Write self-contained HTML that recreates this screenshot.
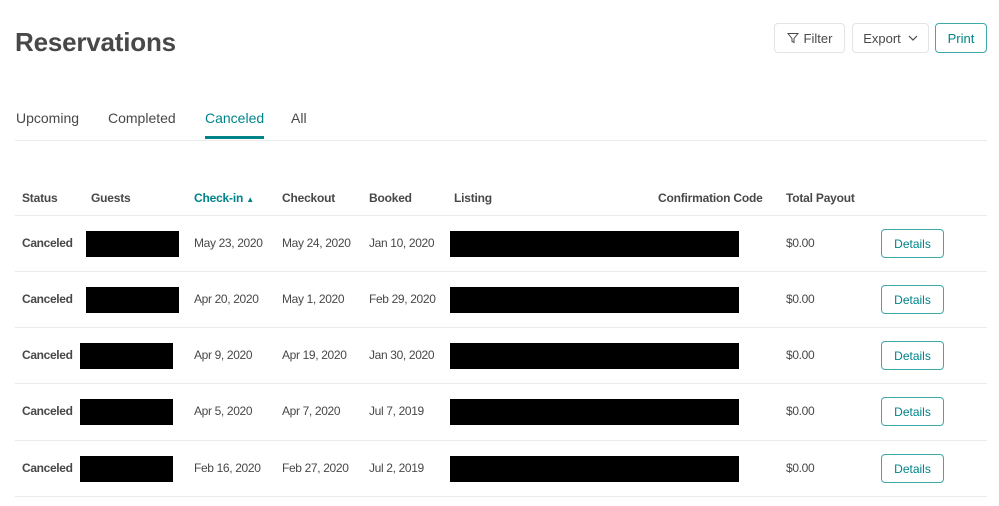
<!DOCTYPE html>
<html><head><style>
*{margin:0;padding:0;box-sizing:border-box}
body{width:999px;height:506px;background:#fff;font-family:"Liberation Sans",sans-serif;color:#484848;position:relative;overflow:hidden}
.a{position:absolute;white-space:nowrap}
.btn{position:absolute;border:1px solid #e4e4e4;border-radius:4px;font-size:13px;display:flex;align-items:center;justify-content:center;height:30px;top:23px}
.hd{font-size:12px;font-weight:bold;top:191px;letter-spacing:-0.2px}
.line{position:absolute;left:15px;width:972px;height:1px;background:#ebebeb}
.cell{font-size:12px;position:absolute;white-space:nowrap;letter-spacing:-0.35px}
.blk{position:absolute;background:#000;height:26px}
.det{position:absolute;left:881px;width:63px;height:29px;border:1px solid #3fa8ab;border-radius:4px;color:#008489;font-size:12px;display:flex;align-items:center;justify-content:center}
</style></head><body>
<div class="a" style="left:15px;top:27px;font-size:26px;font-weight:bold;color:#484848;letter-spacing:-0.2px">Reservations</div>
<div class="btn" style="left:774px;width:71px"><svg width="12" height="12" viewBox="0 0 12 12" style="margin-right:5px"><path d="M1 1.5h10L7 6.5v4L5 9.5v-3z" fill="none" stroke="#484848" stroke-width="1"/></svg>Filter</div>
<div class="btn" style="left:852px;width:77px">Export<svg width="10" height="8" viewBox="0 0 10 8" style="margin-left:7px"><path d="M1 2l4 4 4-4" fill="none" stroke="#484848" stroke-width="1.2"/></svg></div>
<div class="btn" style="left:935px;width:52px;border-color:#3fa8ab;color:#008489">Print</div>
<div class="a" style="left:16px;top:110px;font-size:14px">Upcoming</div>
<div class="a" style="left:108px;top:110px;font-size:14px">Completed</div>
<div class="a" style="left:205px;top:110px;font-size:14px;color:#008489">Canceled</div>
<div class="a" style="left:291px;top:110px;font-size:14px">All</div>
<div class="a" style="left:205px;top:136px;width:59px;height:3px;background:#008489"></div>
<div class="line" style="top:140px"></div>
<div class="a hd" style="left:22px">Status</div>
<div class="a hd" style="left:91px">Guests</div>
<div class="a hd" style="left:194px;color:#008489">Check-in <span style="font-size:8px">▲</span></div>
<div class="a hd" style="left:282px">Checkout</div>
<div class="a hd" style="left:369px">Booked</div>
<div class="a hd" style="left:454px">Listing</div>
<div class="a hd" style="left:658px">Confirmation Code</div>
<div class="a hd" style="left:786px">Total Payout</div>
<div class="line" style="top:215px"></div>
<div class="line" style="top:271px"></div>
<div class="line" style="top:327px"></div>
<div class="line" style="top:383px"></div>
<div class="line" style="top:440px"></div>
<div class="line" style="top:496px"></div>

<div style="position:absolute;left:0;top:243px;width:999px">
<div class="cell" style="left:22px;top:-7px;font-weight:bold">Canceled</div>
<div class="blk" style="left:86px;top:-12px;width:93px"></div>
<div class="cell" style="left:194px;top:-7px">May 23, 2020</div>
<div class="cell" style="left:282px;top:-7px">May 24, 2020</div>
<div class="cell" style="left:369px;top:-7px">Jan 10, 2020</div>
<div class="blk" style="left:450px;top:-12px;width:289px"></div>
<div class="cell" style="left:786px;top:-7px">$0.00</div>
<div class="det" style="top:-14px">Details</div>
</div>
<div style="position:absolute;left:0;top:299px;width:999px">
<div class="cell" style="left:22px;top:-7px;font-weight:bold">Canceled</div>
<div class="blk" style="left:86px;top:-12px;width:93px"></div>
<div class="cell" style="left:194px;top:-7px">Apr 20, 2020</div>
<div class="cell" style="left:282px;top:-7px">May 1, 2020</div>
<div class="cell" style="left:369px;top:-7px">Feb 29, 2020</div>
<div class="blk" style="left:450px;top:-12px;width:289px"></div>
<div class="cell" style="left:786px;top:-7px">$0.00</div>
<div class="det" style="top:-14px">Details</div>
</div>
<div style="position:absolute;left:0;top:355px;width:999px">
<div class="cell" style="left:22px;top:-7px;font-weight:bold">Canceled</div>
<div class="blk" style="left:80px;top:-12px;width:93px"></div>
<div class="cell" style="left:194px;top:-7px">Apr 9, 2020</div>
<div class="cell" style="left:282px;top:-7px">Apr 19, 2020</div>
<div class="cell" style="left:369px;top:-7px">Jan 30, 2020</div>
<div class="blk" style="left:450px;top:-12px;width:289px"></div>
<div class="cell" style="left:786px;top:-7px">$0.00</div>
<div class="det" style="top:-14px">Details</div>
</div>
<div style="position:absolute;left:0;top:411px;width:999px">
<div class="cell" style="left:22px;top:-7px;font-weight:bold">Canceled</div>
<div class="blk" style="left:80px;top:-12px;width:93px"></div>
<div class="cell" style="left:194px;top:-7px">Apr 5, 2020</div>
<div class="cell" style="left:282px;top:-7px">Apr 7, 2020</div>
<div class="cell" style="left:369px;top:-7px">Jul 7, 2019</div>
<div class="blk" style="left:450px;top:-12px;width:289px"></div>
<div class="cell" style="left:786px;top:-7px">$0.00</div>
<div class="det" style="top:-14px">Details</div>
</div>
<div style="position:absolute;left:0;top:468px;width:999px">
<div class="cell" style="left:22px;top:-7px;font-weight:bold">Canceled</div>
<div class="blk" style="left:80px;top:-12px;width:93px"></div>
<div class="cell" style="left:194px;top:-7px">Feb 16, 2020</div>
<div class="cell" style="left:282px;top:-7px">Feb 27, 2020</div>
<div class="cell" style="left:369px;top:-7px">Jul 2, 2019</div>
<div class="blk" style="left:450px;top:-12px;width:289px"></div>
<div class="cell" style="left:786px;top:-7px">$0.00</div>
<div class="det" style="top:-14px">Details</div>
</div>
</body></html>
